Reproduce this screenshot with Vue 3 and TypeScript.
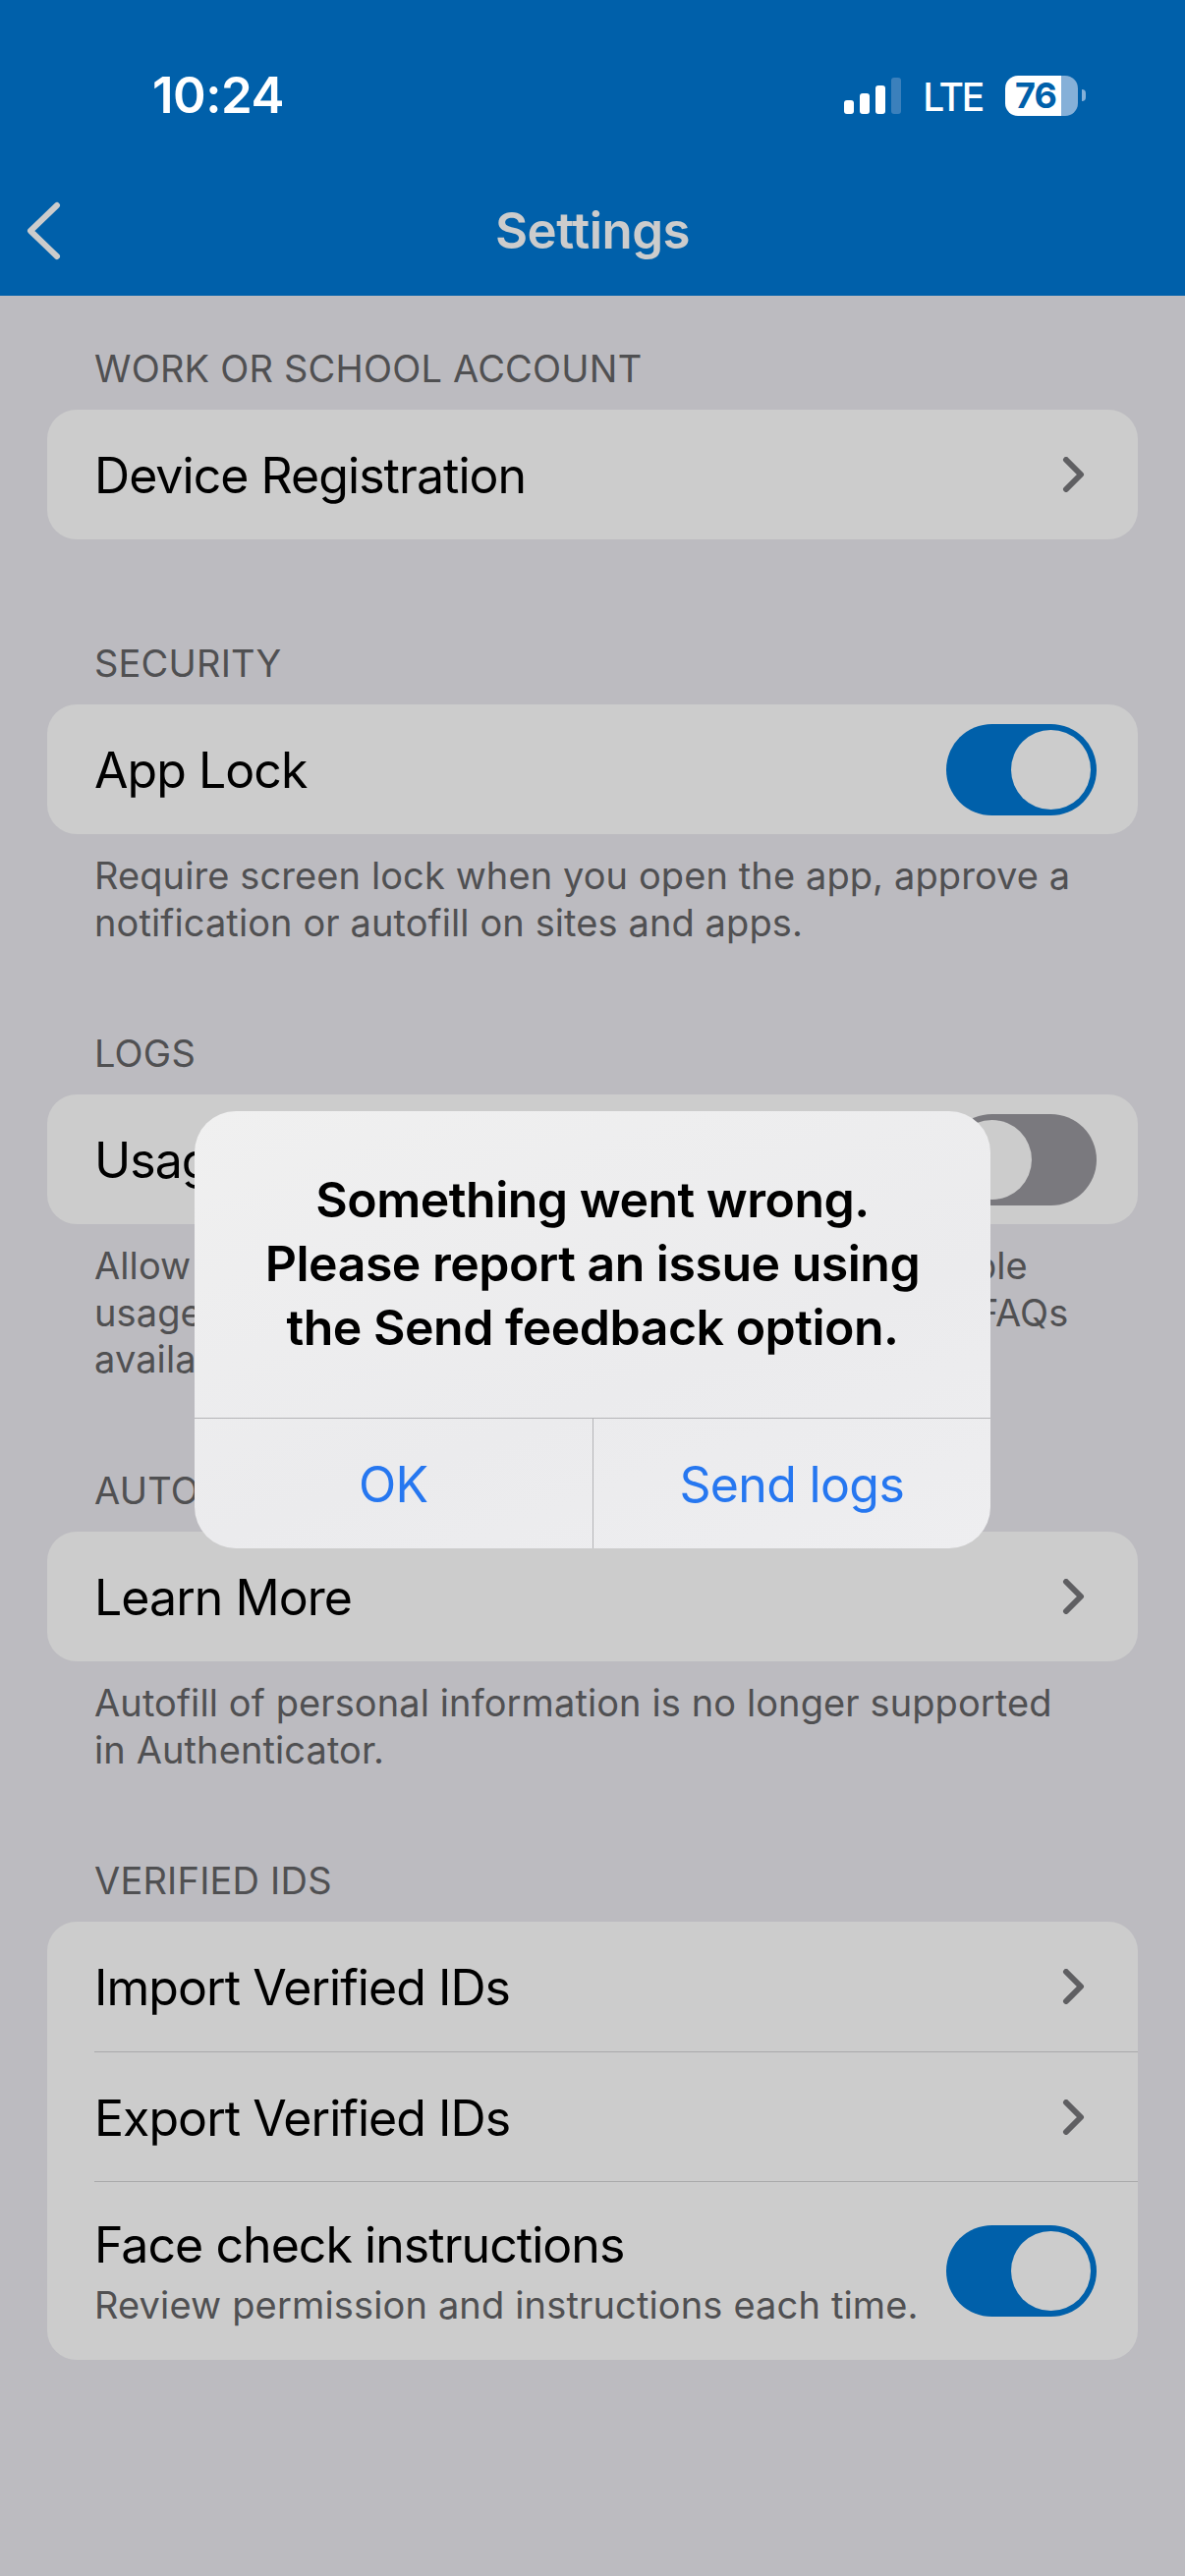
<script setup lang="ts">
interface Row {
  label: string
  sub?: string
  kind: 'link' | 'on' | 'off'
}

interface Section {
  title: string
  rows: Row[]
  note?: string[]
}

const sections: Section[] = [
  {
    title: 'WORK OR SCHOOL ACCOUNT',
    rows: [{ label: 'Device Registration', kind: 'link' }]
  },
  {
    title: 'SECURITY',
    rows: [{ label: 'App Lock', kind: 'on' }],
    note: [
      'Require screen lock when you open the app, approve a',
      'notification or autofill on sites and apps.'
    ]
  },
  {
    title: 'LOGS',
    rows: [{ label: 'Usage Data', kind: 'off' }],
    note: [
      'Allow Microsoft to collect non-personally identifiable',
      'usage data to improve the app. Learn more in the FAQs',
      'available in the Help menu.'
    ]
  },
  {
    title: 'AUTOFILL',
    rows: [{ label: 'Learn More', kind: 'link' }],
    note: [
      'Autofill of personal information is no longer supported',
      'in Authenticator.'
    ]
  },
  {
    title: 'VERIFIED IDS',
    rows: [
      { label: 'Import Verified IDs', kind: 'link' },
      { label: 'Export Verified IDs', kind: 'link' },
      {
        label: 'Face check instructions',
        sub: 'Review permission and instructions each time.',
        kind: 'on'
      }
    ]
  }
]
</script>

<template>
  <div class="settings-page">
    <header class="top-bar">
      <div class="status-bar">
        <span class="time">10:24</span>
        <div class="status-right">
          <div class="signal">
            <i class="b1"></i><i class="b2"></i><i class="b3"></i><i class="b4"></i>
          </div>
          <span class="lte">LTE</span>
          <div class="battery"><span>76</span></div>
          <div class="battery-nub"></div>
        </div>
      </div>
      <div class="nav-bar">
        <svg class="back" width="36" height="60" viewBox="0 0 36 60">
          <path d="M32 4 L5 30 L32 56" fill="none" stroke="#ccc" stroke-width="6" stroke-linecap="round" stroke-linejoin="round" />
        </svg>
        <span class="nav-title">Settings</span>
      </div>
    </header>

    <main class="content">
      <section v-for="s in sections" :key="s.title" class="group" :class="{ 'has-note': s.note }">
        <h2 class="group-title">{{ s.title }}</h2>
        <div class="card">
          <div
            v-for="row in s.rows"
            :key="row.label"
            class="row"
            :class="{ tall: row.sub }"
          >
            <div class="row-text">
              <div class="row-label">{{ row.label }}</div>
              <div v-if="row.sub" class="row-sub">{{ row.sub }}</div>
            </div>
            <svg v-if="row.kind === 'link'" class="chevron" width="24" height="36" viewBox="0 0 24 36">
              <path d="M4 3 L19 18 L4 33" fill="none" stroke="#5f5f62" stroke-width="6" stroke-linecap="round" stroke-linejoin="round" />
            </svg>
            <div v-else class="toggle" :class="row.kind"><span class="knob"></span></div>
          </div>
        </div>
        <p v-if="s.note" class="note">
          <span v-for="line in s.note" :key="line">{{ line }}</span>
        </p>
      </section>
    </main>

    <div class="dialog">
      <div class="dialog-msg">
        Something went wrong.<br />Please report an issue using<br />the Send feedback option.
      </div>
      <div class="dialog-actions">
        <button class="dialog-btn">OK</button>
        <button class="dialog-btn">Send logs</button>
      </div>
    </div>
  </div>
</template>

<style scoped>
.settings-page {
  position: relative;
  width: 1206px;
  height: 2622px;
  background: #bcbbc0;
  font-family: Inter, "Liberation Sans", sans-serif;
  overflow: hidden;
}

.top-bar {
  height: 301px;
  background: #0060aa;
  display: flex;
  flex-direction: column;
}

.status-bar {
  height: 190px;
  display: flex;
  justify-content: space-between;
  padding: 68px 101px 0 155px;
  box-sizing: border-box;
}

.time {
  font-size: 51px;
  font-weight: 600;
  line-height: 58px;
  color: #fff;
  letter-spacing: -0.5px;
}

.status-right {
  display: flex;
  align-items: flex-start;
  padding-top: 2px;
}

.signal {
  display: flex;
  align-items: flex-end;
  gap: 6px;
  height: 37px;
  margin-top: 9px;
}

.signal i {
  display: block;
  width: 10px;
  border-radius: 3px;
  background: #fff;
}

.signal .b1 { height: 14px; }
.signal .b2 { height: 21px; }
.signal .b3 { height: 29px; }
.signal .b4 { height: 37px; background: #3b80bc; }

.lte {
  margin-left: 22px;
  font-size: 39px;
  font-weight: 500;
  line-height: 48px;
  margin-top: 5px;
  color: #fff;
  letter-spacing: -2.2px;
}

.battery {
  margin-left: 23px;
  margin-top: 7px;
  width: 74px;
  height: 41px;
  border-radius: 13px;
  background: linear-gradient(90deg, #fff 57px, #85b0d8 57px);
  color: #0060aa;
  font-size: 36px;
  font-weight: 700;
  line-height: 41px;
  letter-spacing: -1px;
  text-align: center;
}

.battery span {
  display: block;
  width: 56px;
  margin-left: 3px;
}

.battery-nub {
  margin: 21px 0 0 4px;
  width: 4px;
  height: 12px;
  border-radius: 0 6px 6px 0;
  background: #85b0d8;
}

.nav-bar {
  position: relative;
  flex: 1;
  display: flex;
  align-items: center;
  justify-content: center;
  padding-bottom: 22px;
  box-sizing: border-box;
}

.back {
  position: absolute;
  left: 26px;
  top: 15px;
}

.nav-title {
  font-size: 51px;
  font-weight: 600;
  color: #ccc;
  letter-spacing: -0.5px;
}

.content {
  padding: 50px 48px 0;
  display: flex;
  flex-direction: column;
}

.group {
  margin-bottom: 102px;
}

.group.has-note {
  margin-bottom: 85px;
}

.group-title {
  margin: 0;
  height: 66px;
  padding: 1px 0 0 48px;
  box-sizing: border-box;
  font-size: 38px;
  font-weight: 400;
  line-height: 46px;
  color: #505052;
  letter-spacing: 0.2px;
}

.card {
  background: #ccc;
  border-radius: 30px;
  overflow: hidden;
}

.row {
  position: relative;
  height: 132px;
  margin-left: 48px;
  padding-right: 42px;
  display: flex;
  align-items: center;
  justify-content: space-between;
}

.row + .row {
  border-top: 1px solid #a9a9ab;
  box-sizing: border-box;
  height: 132px;
}

.row.tall {
  height: 182px;
}

.row:not(.tall) .row-text {
  padding-top: 2px;
}

.row-label {
  font-size: 50px;
  color: #000;
  line-height: 60px;
  letter-spacing: -0.95px;
}

.row-sub {
  margin-top: 8px;
  font-size: 38px;
  line-height: 46px;
  color: #505052;
  letter-spacing: 0.15px;
}

.chevron {
  margin-right: 11px;
}

.toggle {
  position: relative;
  width: 153px;
  height: 93px;
  border-radius: 47px;
  flex-shrink: 0;
}

.toggle.on {
  background: #0060aa;
}

.toggle.off {
  background: #7a797e;
}

.knob {
  position: absolute;
  top: 6px;
  width: 81px;
  height: 81px;
  border-radius: 50%;
  background: #ccc;
}

.toggle.on .knob {
  right: 6px;
}

.toggle.off .knob {
  left: 6px;
}

.note {
  margin: 19px 0 0;
  padding-left: 48px;
  display: flex;
  flex-direction: column;
  font-size: 38px;
  line-height: 47.6px;
  color: #505052;
  letter-spacing: 0.1px;
}

.note span {
  white-space: nowrap;
}

.dialog {
  position: absolute;
  left: 198px;
  top: 1131px;
  width: 810px;
  height: 445px;
  border-radius: 42px;
  background: linear-gradient(160deg, #f0f0f0, #ebebed 60%, #eeeef0);
  display: flex;
  flex-direction: column;
  overflow: hidden;
}

.dialog-msg {
  height: 313px;
  padding-top: 58px;
  box-sizing: border-box;
  font-size: 50px;
  font-weight: 600;
  line-height: 65px;
  text-align: center;
  color: #000;
  letter-spacing: -0.5px;
  border-bottom: 1px solid #b4b4b7;
}

.dialog-actions {
  flex: 1;
  display: flex;
}

.dialog-btn {
  flex: 1;
  background: none;
  border: 0;
  padding: 2px 0 0;
  font-family: inherit;
  font-size: 50px;
  color: #2677f0;
  letter-spacing: -0.65px;
}

.dialog-btn + .dialog-btn {
  border-left: 1px solid #b4b4b7;
}
</style>
